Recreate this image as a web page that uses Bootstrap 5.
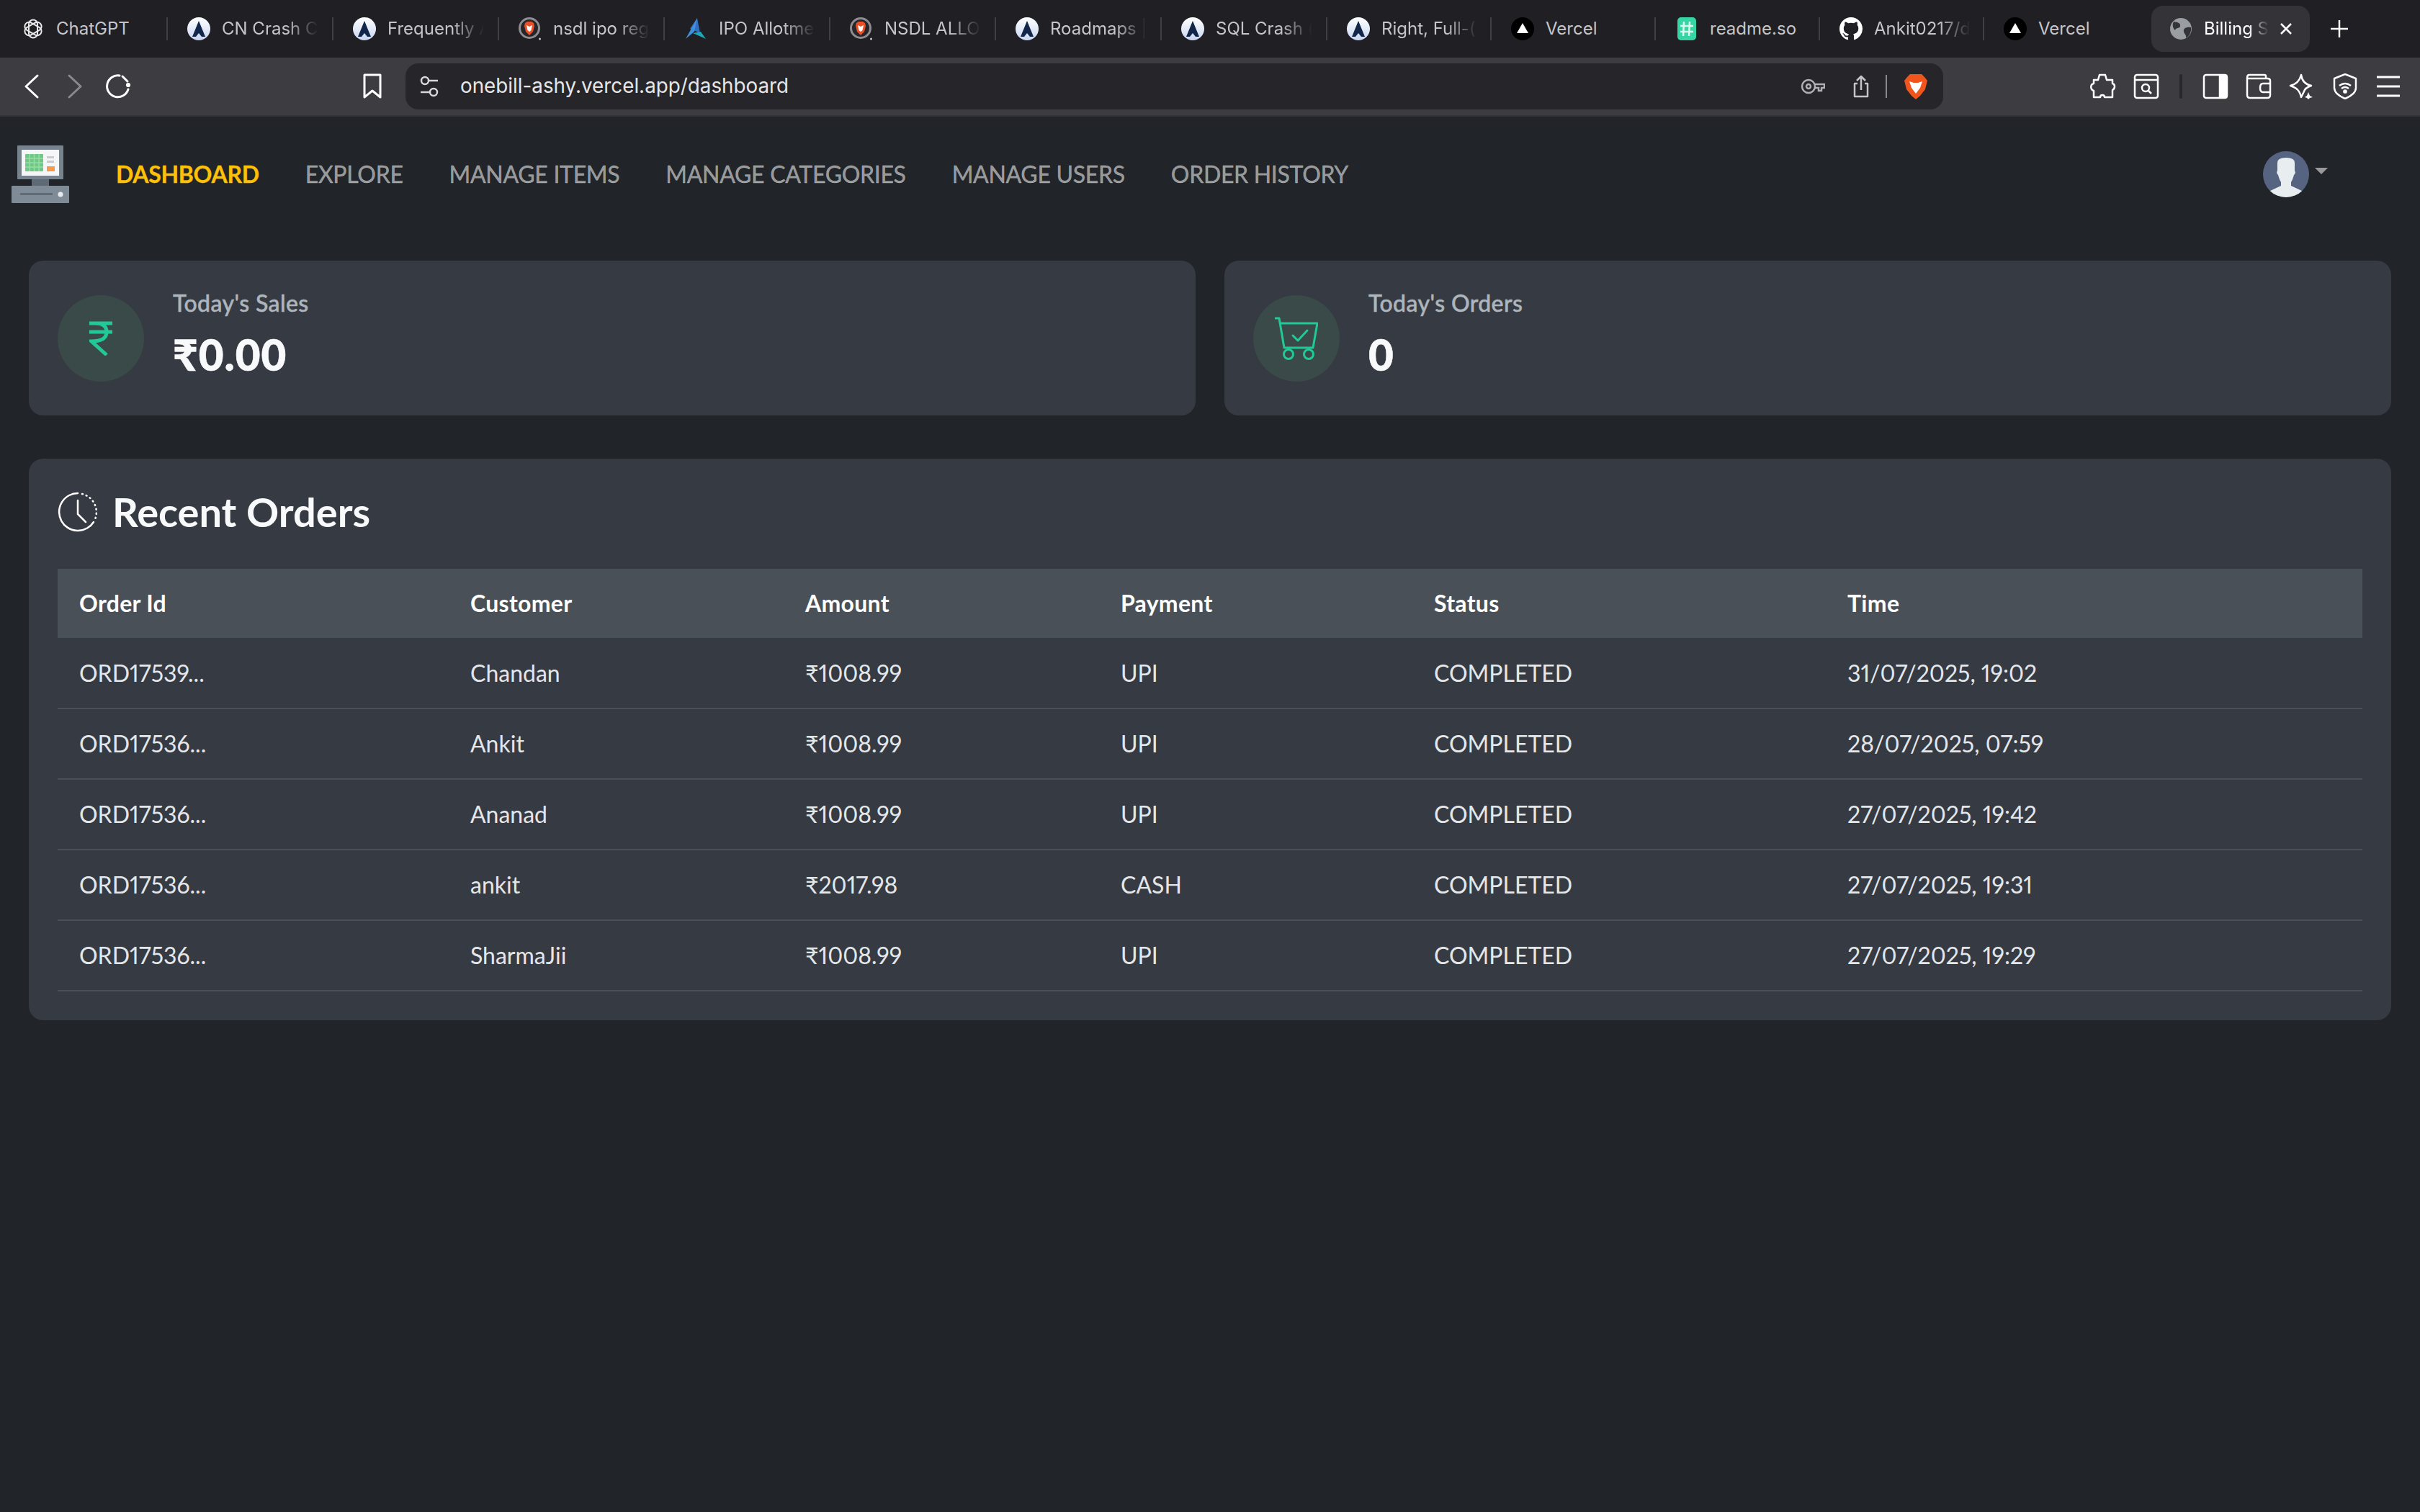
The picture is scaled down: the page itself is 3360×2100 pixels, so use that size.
<!DOCTYPE html>
<html lang="en">
<head>
    <meta charset="UTF-8">
    <meta name="viewport" content="width=device-width, initial-scale=1.0">
    <title>Billing Software</title>
    <link rel="stylesheet" href="https://cdn.jsdelivr.net/npm/bootstrap@5.3.0/dist/css/bootstrap.min.css">
    <style>
        body { background: #212529; font-family: "Lato", "Noto Sans", sans-serif; min-height: 2100px; }
        .icon-defs { position: absolute; width: 0; height: 0; }

        /* browser chrome */
        .tab-strip { height: 80px; background: #1f1f24; padding-left: 3px; font-family: "Inter", sans-serif; font-size: 24px; color: #c6c6c8; }
        .chrome-tab { width: 230px; height: 32px; padding: 0 4px 0 27px; gap: 16px; border-right: 2px solid #3f3f44; flex: none; }
        .chrome-tab.narrow { width: 228px; }
        .chrome-tab.last { border-right: 0; width: 232px; }
        .tab-icon { width: 32px; height: 32px; flex: none; }
        .tab-title { white-space: nowrap; overflow: hidden; flex: 1; -webkit-mask-image: linear-gradient(to right, #000 90px, transparent 134px); mask-image: linear-gradient(to right, #000 90px, transparent 134px); }
        .tab-title.whole { -webkit-mask-image: none; mask-image: none; }
        .tab-active { width: 220px; height: 64px; background: #333338; border-radius: 16px; padding: 0 24px 0 25px; gap: 16px; color: #fff; flex: none; }
        .tab-active .tab-title { -webkit-mask-image: linear-gradient(to right, #000 62px, transparent 90px); mask-image: linear-gradient(to right, #000 62px, transparent 90px); }
        .tab-plus { margin-left: 26px; }
        .tool-bar { height: 82px; background: #3c3c41; border-bottom: 2px solid #333338; gap: 24px; padding: 0 27px 0 26px; }
        .tool-icon { width: 36px; height: 36px; flex: none; }
        .bookmark-gap { margin-left: 293px; margin-right: 4px; }
        .address-box { height: 64px; width: 2135px; background: #25252a; border-radius: 18px; padding: 0 22px 0 20px; font-family: "Inter", sans-serif; font-size: 27.8px; color: #e6e6e8; margin-right: 180px; flex: none; }
        .address-text { margin-left: 30px; }
        .share-gap { margin-left: 38px; }
        .tool-sep { width: 4px; height: 34px; margin: 0 4px; background: #28282c; border-radius: 2px; flex: none; }
        .inner-sep { width: 2px; height: 32px; background: #8a8a8e; margin: 0 24px 0 22px; }

        /* app navbar */
        .app-nav { --bs-navbar-nav-link-padding-x: 32px; height: 160px; padding: 0 0 0 16px; font-size: 32px; }
        .app-nav .navbar-brand { margin-right: 33px; padding: 0; }
        .app-nav .nav-link { padding-top: 0; padding-bottom: 0; color: rgba(255, 255, 255, .55); line-height: 48px; letter-spacing: -.3px; -webkit-text-stroke: .3px currentColor; }
        .app-nav .nav-link.active { color: #ffc107; font-weight: 700; }
        .user-menu { margin-left: auto; margin-right: 128px; gap: 8px; }
        .user-caret { width: 0; height: 0; border-left: 9px solid transparent; border-right: 9px solid transparent; border-top: 9px solid #999; margin-bottom: 10px; }

        /* dashboard */
        .page-wrap { padding: 40px; }
        .stat-row { --bs-gutter-x: 40px; margin-bottom: 60px; }
        .stat-panel { background: #363a42; border: 0; border-radius: 20px; height: 215px; padding: 0 40px; gap: 40px; }
        .stat-circle { width: 120px; height: 120px; background: #3a4a48; border-radius: 50%; flex: none; }
        .stat-text { padding-bottom: 15px; }
        .stat-label { color: #adb5bd; font-size: 32px; font-weight: 500; line-height: 48px; margin-bottom: 11px; letter-spacing: .4px; -webkit-text-stroke: .5px currentColor; }
        .stat-value { color: #f8f9fa; font-size: 60px; font-weight: 900; line-height: 72px; letter-spacing: 1px; -webkit-text-stroke: .6px currentColor; }
        .orders-panel { background: #363a42; border: 0; border-radius: 20px; padding: 40px; }
        .orders-title { color: #f8f9fa; font-size: 56px; font-weight: 700; line-height: 68px; margin: 0 0 45px; gap: 20px; }
        .orders-table { table-layout: fixed; --bs-table-bg: transparent; --bs-table-color: #e4e7ea; margin: 0; font-size: 32px; font-variant-numeric: proportional-nums; }
        .orders-table th { background: #495057; color: #fff; font-weight: 700; height: 96px; padding: 0 30px; border: 0; vertical-align: middle; letter-spacing: .3px; }
        .orders-table td { height: 98px; padding: 0 30px; border-bottom: 2px solid #495057; vertical-align: middle; }
        .orders-table col:nth-child(1) { width: 543px; }
        .orders-table col:nth-child(2) { width: 465px; }
        .orders-table col:nth-child(3) { width: 438px; }
        .orders-table col:nth-child(4) { width: 435px; }
        .orders-table col:nth-child(5) { width: 574px; }
        .orders-table col:nth-child(6) { width: 745px; }
    </style>
</head>
<body>

    <!-- favicons used more than once -->
    <svg class="icon-defs">
        <defs><linearGradient id="astra-bg" x1="0" y1="0" x2="0" y2="1"><stop offset="0" stop-color="#fff"/><stop offset="1" stop-color="#c9d6f2"/></linearGradient></defs>
        <symbol id="ico-astra" viewBox="0 0 32 32">
            <circle cx="16" cy="16" r="16" fill="url(#astra-bg)"/>
            <path d="M16 5 L25 27 H20 L16 22 L12 27 H7 Z" fill="#12264a"/>
        </symbol>
        <symbol id="ico-brave" viewBox="0 0 32 32">
            <circle cx="15" cy="15" r="13.500" fill="#26262a" stroke="#8e8e92" stroke-width="3"/>
            <path d="M9 8 L12 6 H18 L21 8 L22 12 L20 20 L15 25 L10 20 L8 12 Z" fill="#e8502a"/>
            <path d="M11 11 L15 13 L19 11 L17.500 18 L15 20 L12.500 18 Z" fill="#fff"/>
            <circle cx="29.500" cy="30" r="1.500" fill="#ccc"/>
        </symbol>
        <symbol id="ico-vercel" viewBox="0 0 32 32">
            <circle cx="16" cy="16" r="16" fill="#000"/>
            <path d="M16 8 L24 22 H8 Z" fill="#fff"/>
        </symbol>
    </svg>

    <!-- tab strip -->
    <div class="tab-strip d-flex align-items-center">
        <div class="chrome-tab d-flex align-items-center">
            <svg class="tab-icon" viewBox="0 0 32 32" fill="none" stroke="#e8e8e8" stroke-width="2"><g transform="translate(16 16)"><rect x="-6" y="-12.500" width="12" height="25" rx="6"/><rect x="-6" y="-12.500" width="12" height="25" rx="6" transform="rotate(60)"/><rect x="-6" y="-12.500" width="12" height="25" rx="6" transform="rotate(120)"/></g></svg>
            <span class="tab-title whole">ChatGPT</span>
        </div>
        <div class="chrome-tab d-flex align-items-center"><svg class="tab-icon"><use href="#ico-astra"/></svg><span class="tab-title">CN Crash C</span></div>
        <div class="chrome-tab d-flex align-items-center"><svg class="tab-icon"><use href="#ico-astra"/></svg><span class="tab-title">Frequently A</span></div>
        <div class="chrome-tab d-flex align-items-center"><svg class="tab-icon"><use href="#ico-brave"/></svg><span class="tab-title">nsdl ipo reg</span></div>
        <div class="chrome-tab d-flex align-items-center">
            <svg class="tab-icon" viewBox="0 0 32 32"><path d="M18 1 L22 22 L8 16 Z" fill="#2f6fc4"/><path d="M18 1 L14 20 L2 30 Z" fill="#3f8fdc"/><path d="M12 22 L30 30 L23 20 Z" fill="#1fa6b8"/></svg>
            <span class="tab-title">IPO Allotme</span>
        </div>
        <div class="chrome-tab d-flex align-items-center"><svg class="tab-icon"><use href="#ico-brave"/></svg><span class="tab-title">NSDL ALLO</span></div>
        <div class="chrome-tab d-flex align-items-center"><svg class="tab-icon"><use href="#ico-astra"/></svg><span class="tab-title">Roadmaps |</span></div>
        <div class="chrome-tab d-flex align-items-center"><svg class="tab-icon"><use href="#ico-astra"/></svg><span class="tab-title">SQL Crash (</span></div>
        <div class="chrome-tab narrow d-flex align-items-center"><svg class="tab-icon"><use href="#ico-astra"/></svg><span class="tab-title">Right, Full-(</span></div>
        <div class="chrome-tab narrow d-flex align-items-center"><svg class="tab-icon"><use href="#ico-vercel"/></svg><span class="tab-title whole">Vercel</span></div>
        <div class="chrome-tab narrow d-flex align-items-center">
            <svg class="tab-icon" viewBox="0 0 32 32"><rect x="3" y="0" width="26" height="32" rx="5" fill="#36d6a4"/><path d="M12 6 L11 26 M20 6 L19 26 M7 12 H25 M7 20 H25" stroke="#d8fff0" stroke-width="2.500"/></svg>
            <span class="tab-title whole">readme.so</span>
        </div>
        <div class="chrome-tab narrow d-flex align-items-center">
            <svg class="tab-icon" viewBox="0 0 16 16" fill="#fff"><path d="M8 0C3.58 0 0 3.58 0 8c0 3.54 2.29 6.53 5.47 7.59.4.07.55-.17.55-.38 0-.19-.01-.82-.01-1.49-2.01.37-2.53-.49-2.69-.94-.09-.23-.48-.94-.82-1.13-.28-.15-.68-.52-.01-.53.63-.01 1.08.58 1.23.82.72 1.21 1.87.87 2.33.66.07-.52.28-.87.51-1.07-1.78-.2-3.64-.89-3.64-3.95 0-.87.31-1.59.82-2.15-.08-.2-.36-1.02.08-2.12 0 0 .67-.21 2.2.82.64-.18 1.32-.27 2-.27.68 0 1.36.09 2 .27 1.53-1.04 2.2-.82 2.2-.82.44 1.1.16 1.92.08 2.12.51.56.82 1.27.82 2.15 0 3.07-1.87 3.75-3.65 3.95.29.25.54.73.54 1.48 0 1.07-.01 1.93-.01 2.2 0 .21.15.46.55.38A8.013 8.013 0 0016 8c0-4.42-3.58-8-8-8z"/></svg>
            <span class="tab-title">Ankit0217/d</span>
        </div>
        <div class="chrome-tab last d-flex align-items-center"><svg class="tab-icon"><use href="#ico-vercel"/></svg><span class="tab-title whole">Vercel</span></div>
        <div class="tab-active d-flex align-items-center">
            <svg class="tab-icon" viewBox="0 0 32 32"><circle cx="16" cy="16" r="15" fill="#9a9ea3"/><path d="M6 6 C12 7 16 8 15 13 C13 16 9 14 8 18 C6 16 3 12 6 6 Z M30 14 C24 13 19 15 20 20 C21 24 24 24 23 29 C28 26 31 20 30 14 Z" fill="#333338"/></svg>
            <span class="tab-title">Billing S</span>
            <svg width="18" height="18" viewBox="0 0 18 18" stroke="#fff" stroke-width="2.500" class="flex-none"><path d="M2 2 L16 16 M16 2 L2 16"/></svg>
        </div>
        <svg class="tab-plus" width="30" height="30" viewBox="0 0 30 30" stroke="#fff" stroke-width="2.500"><path d="M15 3 V27 M3 15 H27"/></svg>
    </div>

    <!-- toolbar -->
    <div class="tool-bar d-flex align-items-center">
        <svg class="tool-icon" viewBox="0 0 36 36" fill="none" stroke="#fff" stroke-width="3" stroke-linecap="round" stroke-linejoin="round"><path d="M26 3 L10 18 L26 33"/></svg>
        <svg class="tool-icon" viewBox="0 0 36 36" fill="none" stroke="#8a8a8e" stroke-width="3" stroke-linecap="round" stroke-linejoin="round"><path d="M10 3 L26 18 L10 33"/></svg>
        <svg class="tool-icon" viewBox="0 0 36 36" fill="none" stroke="#fff" stroke-width="3" stroke-linecap="round"><path d="M20 3 A15 15 0 1 0 32 22"/><circle cx="32" cy="16" r="1.600" fill="#fff"/><path d="M24 4 L31 11"/></svg>
        <svg class="tool-icon bookmark-gap" viewBox="0 0 36 36" fill="none" stroke="#fff" stroke-width="3" stroke-linejoin="round"><path d="M7 2 H29 V33 L18 24 L7 33 Z"/></svg>
        <div class="address-box d-flex align-items-center">
            <svg width="26" height="30" viewBox="0 0 26 30" fill="none" stroke="#d8d8da" stroke-width="2.500"><circle cx="7" cy="7" r="5"/><path d="M12 7 H25"/><circle cx="19" cy="23" r="5"/><path d="M1 23 H14"/></svg>
            <span class="address-text">onebill-ashy.vercel.app/dashboard</span>
            <svg class="ms-auto" width="34" height="22" viewBox="0 0 34 22" fill="none" stroke="#b0b0b4" stroke-width="2.500"><circle cx="11" cy="11" r="9"/><circle cx="11" cy="11" r="3"/><path d="M20 8 H33 V13 H29 V17 H25 V13 H20"/></svg>
            <svg class="share-gap" width="24" height="32" viewBox="0 0 24 32" fill="none" stroke="#c4c4c8" stroke-width="2.500" stroke-linejoin="round"><path d="M7 12 H3 V30 H21 V12 H17"/><path d="M12 21 V2 M6 8 L12 2 L18 8"/></svg>
            <div class="inner-sep"></div>
            <svg width="32" height="36" viewBox="0 0 32 36"><path d="M8 1 H24 L28 5 L32 10 L29 22 L22 31 L16 36 L10 31 L3 22 L0 10 L4 5 Z" fill="#f0551e"/><path d="M7 11 L13 13 H19 L25 11 L22 20 L19 24 L16 28 L13 24 L10 20 Z" fill="#fff"/></svg>
        </div>
        <svg class="tool-icon" viewBox="0 0 36 36" fill="none" stroke="#fff" stroke-width="2.500" stroke-linejoin="round"><path d="M13 2 H21 L23 9 H31 L31 14 C35 15 35 21 31 23 V33 H20 C20 29 14 29 14 33 H5 V24 C0 22 0 15 5 14 V9 H11 Z"/></svg>
        <svg class="tool-icon" viewBox="0 0 36 36" fill="none" stroke="#fff" stroke-width="2.500"><rect x="2" y="2" width="32" height="32" rx="3"/><path d="M2 9 H34"/><circle cx="17" cy="20" r="5"/><path d="M21 24 L25 28"/></svg>
        <div class="tool-sep"></div>
        <svg class="tool-icon" viewBox="0 0 36 36" fill="none" stroke="#fff" stroke-width="2.500"><rect x="2" y="2" width="32" height="32" rx="3"/><rect x="24" y="3" width="9" height="30" fill="#fff"/></svg>
        <svg class="tool-icon" viewBox="0 0 36 36" fill="none" stroke="#fff" stroke-width="2.500"><path d="M28 7 V4 Q28 2 26 2 H5 Q2 2 2 6 V30 Q2 34 6 34 H30 Q34 34 34 30 V10 Q34 7 30 7 H2"/><path d="M34 14 H24 Q20 14 20 20 Q20 26 24 26 H34"/></svg>
        <svg class="tool-icon" viewBox="0 0 36 36" fill="none" stroke="#fff" stroke-width="2.500" stroke-linejoin="round"><path d="M17 2 C18 10 22 15 31 17 C25 19 22 21 21 25 L17 33 C15 24 11 20 2 17 C11 15 15 10 17 2 Z"/><path d="M27 26 L29 31 L33 33 L29 34 L27 36 L25 34 L22 33 L25 31 Z" fill="#fff" stroke="none"/></svg>
        <svg class="tool-icon" viewBox="0 0 36 36" fill="none" stroke="#fff" stroke-width="2.500" stroke-linejoin="round"><path d="M18 1 L33 7 V20 C33 27 25 32 18 35 C11 32 3 27 3 20 V7 Z"/><path d="M10 17 Q18 11 26 17 M13 21 Q18 17 23 21"/><circle cx="18" cy="25" r="1.600" fill="#fff"/></svg>
        <svg class="tool-icon" viewBox="0 0 36 36" stroke="#fff" stroke-width="3"><path d="M2 5 H34 M2 18 H34 M2 31 H34"/></svg>
    </div>

    <!-- app navbar -->
    <nav class="navbar navbar-expand app-nav">
        <a class="navbar-brand" href="#">
            <svg class="d-block" width="80" height="80" viewBox="0 0 80 80">
                <rect x="8" y="0" width="64" height="47" rx="1" fill="#76838f"/>
                <rect x="14" y="6" width="52" height="36" fill="#f5f6f8"/>
                <rect x="19" y="12" width="25" height="24" rx="1" fill="#6fc985"/>
                <path d="M25 12 V36 M31.500 12 V36 M38 12 V36 M19 18 H44 M19 24 H44 M19 30 H44" stroke="#9adba9" stroke-width="1.500"/>
                <rect x="49" y="15" width="10" height="3" fill="#c9cccf"/>
                <rect x="49" y="21" width="10" height="3" fill="#c9cccf"/>
                <rect x="49" y="29" width="11" height="7" fill="#f89a4c"/>
                <rect x="28" y="47" width="24" height="10" fill="#5e6a75"/>
                <rect x="0" y="56" width="80" height="24" rx="1" fill="#7f8c98"/>
                <rect x="12" y="66" width="45" height="3" fill="#5e6a75"/>
                <circle cx="68" cy="68" r="3.500" fill="#e8eaec"/>
            </svg>
        </a>
        <ul class="navbar-nav">
            <li class="nav-item"><a class="nav-link active" href="#">DASHBOARD</a></li>
            <li class="nav-item"><a class="nav-link" href="#">EXPLORE</a></li>
            <li class="nav-item"><a class="nav-link" href="#">MANAGE ITEMS</a></li>
            <li class="nav-item"><a class="nav-link" href="#">MANAGE CATEGORIES</a></li>
            <li class="nav-item"><a class="nav-link" href="#">MANAGE USERS</a></li>
            <li class="nav-item"><a class="nav-link" href="#">ORDER HISTORY</a></li>
        </ul>
        <div class="user-menu d-flex align-items-center">
            <svg width="64" height="64" viewBox="0 0 64 64">
                <clipPath id="avatar-clip"><circle cx="32" cy="32" r="32"/></clipPath>
                <circle cx="32" cy="32" r="32" fill="#566482"/>
                <path clip-path="url(#avatar-clip)" d="M20 16 Q20 9 32 9 Q44 9 44 16 V27 Q46 30 43 33 Q41 40 39 43 V48 L56 56 V64 H8 V56 L25 48 V43 Q23 40 21 33 Q18 30 20 27 Z" fill="#e8eeef"/>
            </svg>
            <div class="user-caret"></div>
        </div>
    </nav>

    <main class="page-wrap">
        <div class="row stat-row">
            <div class="col-6">
                <div class="card stat-panel flex-row align-items-center">
                    <div class="stat-circle d-flex align-items-center justify-content-center">
                        <svg width="32" height="48" viewBox="0 0 32 48" fill="none" stroke="#20c997" stroke-width="5"><path d="M0 3 H32 M0 15 H32 M8 3 Q24 3 24 15 Q24 28 3 28 L24 47"/></svg>
                    </div>
                    <div class="stat-text">
                        <div class="stat-label">Today's Sales</div>
                        <div class="stat-value">₹0.00</div>
                    </div>
                </div>
            </div>
            <div class="col-6">
                <div class="card stat-panel flex-row align-items-center">
                    <div class="stat-circle d-flex align-items-center justify-content-center">
                        <svg width="60" height="60" viewBox="0 0 60 60" fill="none" stroke="#20c997" stroke-width="3" stroke-linecap="round" stroke-linejoin="round"><path d="M1 2 H6 L13 43 H53 L59 9 H7"/><circle cx="19" cy="52" r="6.500"/><circle cx="47" cy="52" r="6.500"/><path d="M25 26 L32 33 L45 19"/></svg>
                    </div>
                    <div class="stat-text">
                        <div class="stat-label">Today's Orders</div>
                        <div class="stat-value">0</div>
                    </div>
                </div>
            </div>
        </div>

        <div class="card orders-panel">
            <h2 class="orders-title d-flex align-items-center">
                <svg width="56" height="56" viewBox="0 0 56 56" fill="none" stroke="#fff" stroke-width="2.500" stroke-linecap="round"><path d="M28 2 A26 26 0 1 0 50 42"/><path d="M34 3 A26 26 0 0 1 52 38" stroke-dasharray="1 5"/><path d="M28 12 V31 L39 42"/></svg>
                Recent Orders
            </h2>
            <table class="table orders-table">
                <colgroup><col><col><col><col><col><col></colgroup>
                <thead>
                    <tr><th>Order Id</th><th>Customer</th><th>Amount</th><th>Payment</th><th>Status</th><th>Time</th></tr>
                </thead>
                <tbody>
                    <tr><td>ORD17539...</td><td>Chandan</td><td>₹1008.99</td><td>UPI</td><td>COMPLETED</td><td>31/07/2025, 19:02</td></tr>
                    <tr><td>ORD17536...</td><td>Ankit</td><td>₹1008.99</td><td>UPI</td><td>COMPLETED</td><td>28/07/2025, 07:59</td></tr>
                    <tr><td>ORD17536...</td><td>Ananad</td><td>₹1008.99</td><td>UPI</td><td>COMPLETED</td><td>27/07/2025, 19:42</td></tr>
                    <tr><td>ORD17536...</td><td>ankit</td><td>₹2017.98</td><td>CASH</td><td>COMPLETED</td><td>27/07/2025, 19:31</td></tr>
                    <tr><td>ORD17536...</td><td>SharmaJii</td><td>₹1008.99</td><td>UPI</td><td>COMPLETED</td><td>27/07/2025, 19:29</td></tr>
                </tbody>
            </table>
        </div>
    </main>

    <script src="https://cdn.jsdelivr.net/npm/bootstrap@5.3.0/dist/js/bootstrap.bundle.min.js"></script>
</body>
</html>
